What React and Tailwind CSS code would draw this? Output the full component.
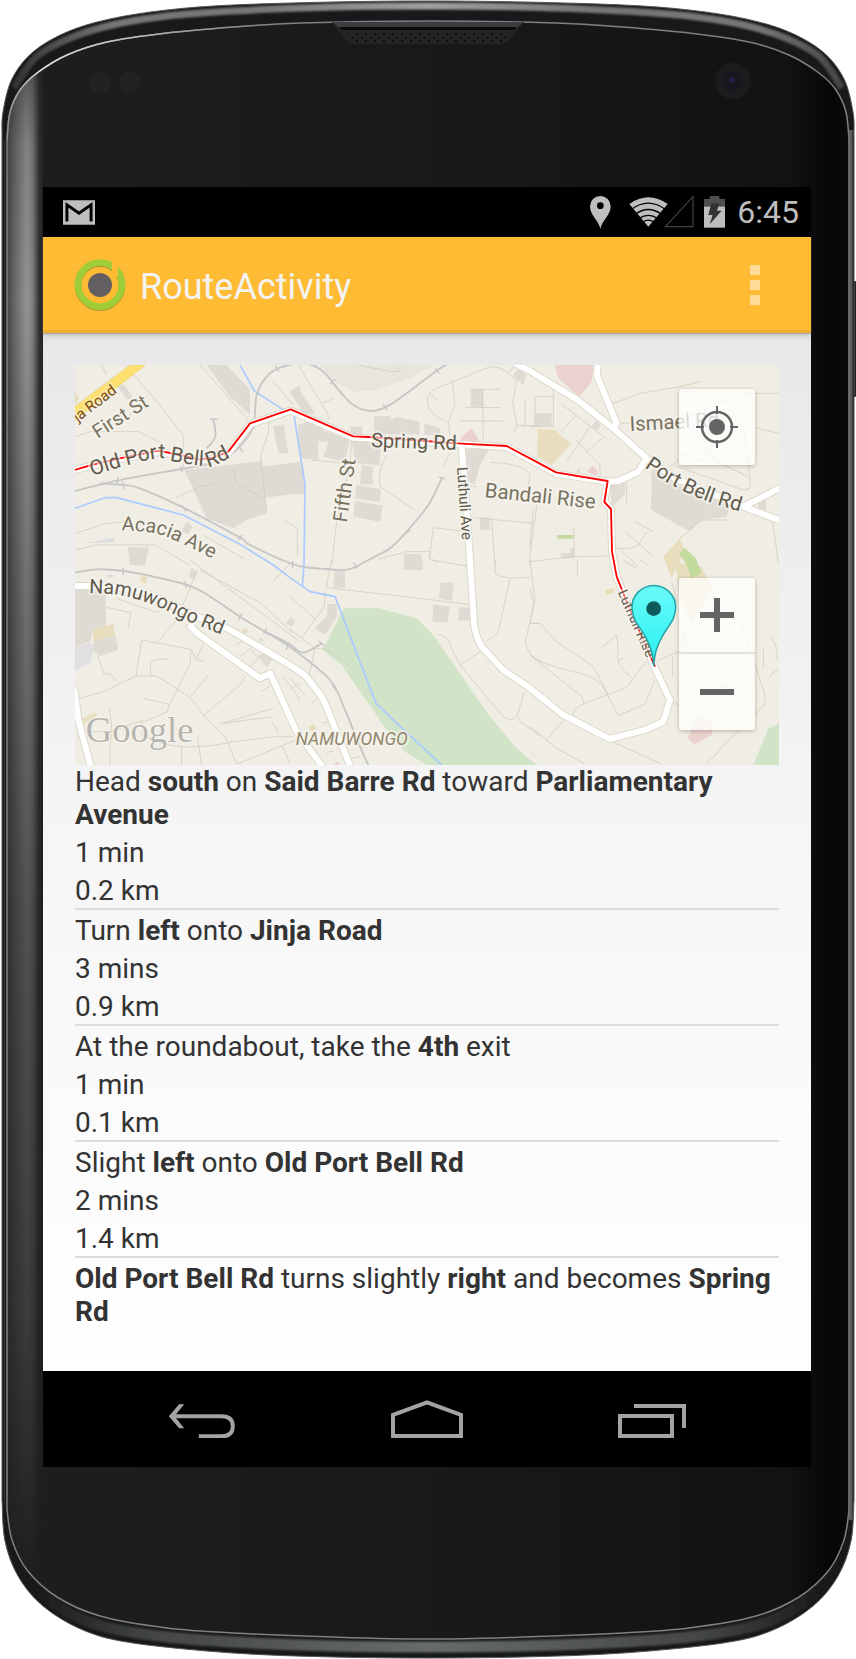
import React from 'react';

const FONT = 'Roboto, "Liberation Sans", sans-serif';

/* Catmull-Rom curve through a flat list of points. */
function curve(flat, start = 'M') {
  const p = [];
  for (let i = 0; i < flat.length; i += 2) p.push([flat[i], flat[i + 1]]);
  let d = `${start}${p[0][0]} ${p[0][1]}`;
  for (let i = 0; i < p.length - 1; i++) {
    const a = p[i - 1] || p[i];
    const b = p[i];
    const c = p[i + 1];
    const e = p[i + 2] || c;
    d += `C${(b[0] + (c[0] - a[0]) / 6).toFixed(1)} ${(b[1] + (c[1] - a[1]) / 6).toFixed(1)} ${(c[0] - (e[0] - b[0]) / 6).toFixed(1)} ${(c[1] - (e[1] - b[1]) / 6).toFixed(1)} ${c[0]} ${c[1]}`;
  }
  return d;
}

function mirrored(flat) {
  const out = [...flat];
  for (let i = flat.length - 4; i >= 0; i -= 2) out.push(856 - flat[i], flat[i + 1]);
  return out;
}

const OUTER_TOP = mirrored([2, 134, 3, 112, 12, 79, 33, 52, 67, 32, 110, 19, 167, 10, 233, 5, 333, 2, 428, 1]);
const OUTER_BOTTOM = mirrored([2, 1500, 5, 1541, 18, 1576, 43, 1606, 83, 1630, 133, 1643, 233, 1653, 333, 1657, 428, 1658]);
const INNER_TOP = mirrored([7, 140, 10, 112, 20, 90, 37, 73, 67, 55, 107, 42, 167, 33, 233, 27, 300, 23, 428, 21]);
const INNER_BOTTOM = mirrored([7, 1510, 12, 1540, 27, 1570, 57, 1597, 100, 1616, 167, 1628, 233, 1633, 333, 1637, 428, 1639]);
const RIM_TOP = mirrored([14, 88, 36, 57, 70, 38, 112, 25, 167, 16, 233, 11, 333, 7, 428, 6]);
const RIM_BOTTOM = mirrored([40, 1592, 70, 1614, 110, 1628, 167, 1637, 233, 1642, 333, 1646, 428, 1647]);

function reversed(flat) {
  const out = [];
  for (let i = flat.length - 2; i >= 0; i -= 2) out.push(flat[i], flat[i + 1]);
  return out;
}

const OUTER = curve(OUTER_TOP) + curve(reversed(OUTER_BOTTOM), 'L') + 'Z';
const INNER = curve(INNER_TOP) + curve(reversed(INNER_BOTTOM), 'L') + 'Z';

function PhoneBody() {
  return (
    <svg aria-hidden="true" viewBox="0 0 856 1659" preserveAspectRatio="none" className="absolute inset-0 h-full w-full">
      <defs>
        <linearGradient id="face" x1="0" x2="1" y1="0" y2="0">
          <stop offset="0" stopColor="#1e1e1e" />
          <stop offset="0.5" stopColor="#191919" />
          <stop offset="0.93" stopColor="#121212" />
          <stop offset="0.98" stopColor="#060606" />
          <stop offset="1" stopColor="#0a0a0a" />
        </linearGradient>
        <linearGradient id="shine" gradientUnits="userSpaceOnUse" x1="8" x2="44" y1="0" y2="0">
          <stop offset="0" stopColor="#4a4a4a" />
          <stop offset="0.2" stopColor="#6a6a6a" />
          <stop offset="0.52" stopColor="#949494" />
          <stop offset="0.68" stopColor="#808080" />
          <stop offset="0.86" stopColor="#343434" />
          <stop offset="1" stopColor="#1e1e1e" />
        </linearGradient>
        <linearGradient id="shineFade" gradientUnits="userSpaceOnUse" x1="0" x2="0" y1="70" y2="1590">
          <stop offset="0" stopColor="#fff" stopOpacity="0.5" />
          <stop offset="0.05" stopColor="#fff" stopOpacity="0.85" />
          <stop offset="0.15" stopColor="#fff" />
          <stop offset="0.35" stopColor="#fff" stopOpacity="0.7" />
          <stop offset="0.55" stopColor="#fff" stopOpacity="0.45" />
          <stop offset="0.82" stopColor="#fff" stopOpacity="0.26" />
          <stop offset="1" stopColor="#fff" stopOpacity="0" />
        </linearGradient>
        <mask id="shineMask">
          <rect x="0" y="70" width="60" height="1540" fill="url(#shineFade)" />
        </mask>
        <linearGradient id="rimTop" x1="0" x2="1" y1="0" y2="0">
          <stop offset="0" stopColor="#333" />
          <stop offset="0.12" stopColor="#777" />
          <stop offset="0.3" stopColor="#777" />
          <stop offset="0.5" stopColor="#a0a0a0" />
          <stop offset="0.7" stopColor="#757575" />
          <stop offset="0.9" stopColor="#777" />
          <stop offset="1" stopColor="#444" />
        </linearGradient>
        <linearGradient id="rimBottom" x1="0" x2="1" y1="0" y2="0">
          <stop offset="0" stopColor="#1c1c1c" />
          <stop offset="0.15" stopColor="#454747" />
          <stop offset="0.5" stopColor="#676b6b" />
          <stop offset="0.85" stopColor="#454747" />
          <stop offset="1" stopColor="#1c1c1c" />
        </linearGradient>
        <linearGradient id="edgeGlint" gradientUnits="userSpaceOnUse" x1="7" x2="300" y1="0" y2="0">
          <stop offset="0" stopColor="#999" stopOpacity="0.6" />
          <stop offset="0.1" stopColor="#e0e0e2" />
          <stop offset="0.5" stopColor="#b0b0b4" />
          <stop offset="1" stopColor="#808084" stopOpacity="0" />
        </linearGradient>
        <filter id="soft" x="-5%" y="-40%" width="110%" height="180%">
          <feGaussianBlur stdDeviation="1.2" />
        </filter>
        <pattern id="grille" width="9" height="7" patternUnits="userSpaceOnUse" x="346" y="32">
          <circle cx="2" cy="2" r="1" fill="#050505" />
          <circle cx="6.5" cy="5.5" r="1" fill="#050505" />
        </pattern>
        <clipPath id="faceClip">
          <path d={INNER} />
        </clipPath>
      </defs>
      <rect x="853" y="281" width="3" height="116" rx="1" fill="#222" />
      <path d={OUTER} fill="#18191a" stroke="#555" strokeWidth="1" />
      <path d={curve(RIM_TOP)} fill="none" stroke="url(#rimTop)" strokeWidth="7" filter="url(#soft)" />
      <path d={curve(RIM_BOTTOM)} fill="none" stroke="url(#rimBottom)" strokeWidth="11" filter="url(#soft)" />
      <path d={INNER} fill="url(#face)" />
      <g clipPath="url(#faceClip)">
        <rect x="7" y="70" width="37" height="1540" fill="url(#shine)" mask="url(#shineMask)" />
      </g>
      <path d={INNER} fill="none" stroke="#808084" strokeWidth="1.5" />
      <path d={curve([7, 140, 10, 112, 20, 90, 37, 73, 67, 55, 107, 42, 167, 33, 233, 27, 300, 23])} fill="none" stroke="url(#edgeGlint)" strokeWidth="1.5" />
      <path d="M850.5 130V1520" stroke="#6d6f70" strokeWidth="4" opacity="0.8" />
      <path d="M4.500 140V1505" stroke="#2c2e2e" strokeWidth="1.500" />
      <path d="M332 22L345 40Q348 44 353 44H500Q506 44 510 39L524 22Z" fill="#242425" />
      <path d="M332 22L340 28H516L524 22Z" fill="#3c3d40" />
      <path d="M339 27L342 30H514L517 27Z" fill="#0c0c0c" />
      <rect x="348" y="32" width="160" height="10" fill="url(#grille)" />
      <circle cx="100" cy="82" r="11" fill="#222" />
      <circle cx="130" cy="82" r="11" fill="#222" />
      <circle cx="733" cy="81" r="18" fill="#1c1c1e" />
      <circle cx="733" cy="81" r="10" fill="#171720" />
      <circle cx="732" cy="80" r="3" fill="#232044" />
    </svg>
  );
}

const ROADS = [
  curve([-20, 320, 60, 300, 145, 281, 250, 262, 300, 270, 375, 285, 415, 281, 462, 262]) + 'L527 177L647 137L835 218L880 220L1160 238L1295 246L1443 326L1598 350L1588 411L1608 432L1611 560L1625 635L1665 735L1737 903L1785 1005L1765 1070L1715 1093L1605 1122L1465 1050L1365 970L1285 915L1220 845Q1200 810 1197 775L1185 585L1160 240',
  'M1310 -10L1365 18L1505 103L1615 190L1715 280L1800 340L2005 425L2130 472M2005 425L2130 362M1715 280L1690 320L1630 348L1600 350M1570 -10L1565 30L1625 175L1615 190',
  'M-20 663H90' + curve([90, 663, 215, 685, 355, 750, 455, 790, 555, 847, 675, 920, 705, 950, 745, 1005, 780, 1090, 830, 1215], 'L'),
  'M357 755L347 785L370 807L555 940L585 925L665 1100L750 1215',
  'M-10 960L0 985L10 1065L50 1215',
];

function Tile({ x, y, children }) {
  return <g transform={`translate(${x} ${y})`}>{children}</g>;
}

function MapArt() {
  return (
    <svg
      role="img"
      aria-label="Map of the route"
      viewBox="0 0 2112 1200"
      preserveAspectRatio="xMidYMid slice"
      className="block h-[400px] w-full bg-[#f0ede4]"
      style={{ fontFamily: FONT }}
    >
      <defs>
        <path id="firstSt" d="M68 222L270 92" />
        <path id="jinja" d="M8 172L160 57" />
        <path id="oldPort" d={curve([52, 333, 145, 304, 250, 280, 300, 290, 380, 302, 425, 298, 540, 236])} />
        <path id="acacia" d={curve([140, 496, 235, 504, 320, 535, 500, 626])} />
        <path id="namu" d={curve([42, 684, 140, 692, 240, 722, 355, 775, 500, 832])} />
        <path id="portBell" d={curve([1708, 307, 1790, 360, 1900, 410, 2060, 458])} />
        <path id="luthuliRise" d="M1628 682L1733 920" />
        <linearGradient id="marker" x1="0" x2="0" y1="0" y2="1">
          <stop offset="0" stopColor="#6afafa" />
          <stop offset="1" stopColor="#28f0f0" />
        </linearGradient>
      </defs>

      {/* parks and fields */}
      <g fill="#d1e4c8">
        <path d="M807 730H910L1025 760L1075 810L1245 1055L1325 1150L1385 1200H1055L990 1160L935 1095L800 900L743 855Z" />
        <path d="M2035 1200L2080 1090L2112 1075V1200ZM1365 1185L1385 1200H1365Z" />
      </g>
      <path fill="#e8e5dd" d="M735 0L780 50L835 80L905 75L1015 35L1075 0Z" />

      {/* buildings */}
      <g fill="#dfdad4">
        <Tile x={-45} y={-30}>
          <path d="M440 30H500L570 105V180L505 120ZM373 345L605 318L620 475L560 495L520 520L440 490ZM607 335L720 320V415L615 428ZM640 215L672 208L684 295H655ZM172 95L190 88L215 120V132H200ZM365 530L380 500L397 515L385 538ZM203 577H267L255 630H210ZM690 115L720 90V140Z" />
          <path fill="#dcdcdc" d="M80 565L162 548V562Z" />
        </Tile>
        <Tile x={645} y={-30}>
          <path d="M0 110L20 95L78 178L40 175ZM25 210L85 190L100 225L180 255L165 320L100 305L115 262L85 258V315L35 310L25 260ZM180 215H217V240L275 255L268 330L195 325ZM252 184H300V195L320 185L388 200V238H252ZM403 205L450 220V240H403ZM215 330L248 335V388H210ZM200 390L273 403L270 440L195 430ZM195 437L278 452L270 500L190 485ZM0 325L40 330L42 418H0ZM542 103H580V155H542ZM530 285L600 275L570 330L553 390L530 375ZM570 487H600V525H570ZM668 60L690 38L708 60L700 92ZM735 175H750V210H735ZM343 597H395V630H343Z" />
        </Tile>
        <Tile x={1365} y={-30}>
          <path d="M12 175H65V213H12ZM185 213L200 195L212 210L202 228ZM240 390L285 375V415L245 458ZM372 335L460 400L600 450L590 485L515 495L478 528L363 465L365 350ZM685 430H708V465H685ZM92 595H120V580H132V610H92ZM138 350L150 335V355Z" />
        </Tile>
        <Tile x={-45} y={585}>
          <path d="M45 87H138V195L98 213L90 245L45 260ZM102 240L165 225L175 270L120 288L98 270ZM207 0H258L250 18L210 12ZM386 50L395 25L412 35L403 58ZM595 288L620 275L640 295L620 322ZM678 190L692 172L705 185L695 200ZM592 240L605 232L612 245ZM140 45H160V52H140Z" />
          <path fill="#e0e0e0" d="M45 262L92 248L102 262L92 310L45 330Z" />
        </Tile>
        <Tile x={645} y={585}>
          <path d="M135 33H165V83H130ZM75 205L112 165V132H140V170L105 225ZM342 0H398V30H342ZM452 68H492L485 122L447 115ZM430 133L480 140L472 188L427 185ZM507 140L547 145V182H504ZM0 170L12 182L0 198Z" />
        </Tile>
        <path d="M1925 970L1955 955L1972 970Z" />
      </g>
      <g fill="#ecd2cf">
        <Tile x={1365} y={-30}>
          <path d="M75 30H190L185 80L148 125L85 70ZM170 350L188 332L205 348L200 362Z" />
        </Tile>
        <path d="M1158 215L1190 190L1212 225V236H1160Z" />
        <path d="M1837 1118L1870 1055L1915 1075L1910 1110L1858 1138ZM777 1200L787 1188L795 1200Z" />
      </g>
      <g fill="#e8ddbd">
        <path d="M1388 192L1440 195L1488 238L1430 300L1387 275ZM1765 575L1815 520L1830 560L1795 625L1790 640ZM1800 590L1880 605L1912 675L1850 770L1820 710ZM1590 675L1620 668L1615 685L1592 690Z" />
        <path d="M55 792L115 777L120 810L55 828ZM20 1060L58 1043L68 1050L20 1080ZM195 650L200 632L218 637L212 655ZM700 1085L715 1078L725 1090L710 1100ZM500 798L508 790L520 797L510 808ZM0 80L12 100L0 120Z" />
      </g>
      <path fill="#c3dc9d" d="M1812 565L1830 548L1862 580L1880 625L1850 640L1835 600ZM1447 510H1495V521H1447Z" />

      {/* side streets */}
      <g fill="none" stroke="#d3cec1" strokeWidth="2.500">
        <Tile x={-45} y={-30}>
          <path d="M125 30L140 60M195 30L270 115L370 240V340M270 115L205 185L160 205M45 245L90 230H235L300 262M420 30L565 195M640 80L700 150M628 195L625 235L602 300L620 470M348 428L420 395L475 385M520 345L530 385L610 430M45 535L140 505L210 500M45 585L110 570H285L390 630M430 540L550 610M672 495L712 520V600" />
        </Tile>
        <Tile x={645} y={-30}>
          <path d="M25 30L115 180V195M98 145L130 130M205 30L305 50L330 48V30M470 200C390 170 405 110 440 100L600 35C640 35 665 60 680 80L668 140L680 210M420 115L445 138M487 75L495 150L475 200L480 240M460 332L480 295M540 103H632M525 157L630 158M577 103L580 255M512 198H640M185 250L180 330L140 500L125 630M65 315L170 325M290 300C270 330 265 370 270 395L370 462M602 322C680 325 710 340 720 360L715 395M540 395L560 395M540 487L730 505M605 490L615 630M740 450L720 600V630M430 518L530 530M430 518L418 610L440 620M265 612L350 590H420L418 610M705 135V215M670 235L680 212H750M680 30L650 55" />
        </Tile>
        <Tile x={1365} y={-30}>
          <path d="M0 215H70V105M15 175V125H70M92 145L230 252M138 180L92 232M180 215L110 320M215 250L165 295M138 255L210 330V360M250 145L330 115L450 95L512 80M265 205L440 200L570 145L640 115H747M675 218L747 235M640 215L660 370V400M430 330L640 405L660 400M420 335L510 265L560 320L655 365M455 300L525 320L560 260M290 375V445M315 500L370 530M285 530L370 605M352 530L325 570L300 580M272 585L320 630M255 580H300M450 550L515 495H590M728 500L745 625M10 460L0 575M132 515V605L0 620M132 605L235 603" />
        </Tile>
        <Tile x={-45} y={585}>
          <path d="M410 35L350 180L297 243M245 240L393 268L408 298L430 305M245 240L228 348M430 250L410 295M140 142L212 158L205 203M170 115L290 158L297 150M272 350V310Q280 295 328 297M52 418L130 395L228 348H290L390 412L430 465L495 530L530 612M393 268L390 310L328 438M390 412L445 345M250 415L328 433L322 455L240 490M430 467L540 375L555 350M480 492L640 445M495 490L560 480L640 470M95 515H150L250 480M248 520L250 500M365 560V615M412 530L425 615M240 520C330 580 450 560 520 545L645 530L700 530M530 612L720 535M148 445L155 500L150 560V615M638 490L655 515M668 560L690 610M112 285L132 342H150L168 362M525 255L570 230M540 290L570 265L600 300M560 330L600 290M390 0L720 245M420 30L600 128L700 220M640 65L690 10M605 395L640 370M670 350L720 420" />
        </Tile>
        <Tile x={645} y={585}>
          <path d="M125 0L108 85M112 83L540 133M105 95L103 140L33 235M0 108L78 180M0 208L75 265L58 345M75 265H105L215 345M425 0L530 18M615 0V40Q640 60 720 52M660 55L625 215Q610 235 590 242M442 222Q480 230 485 265L510 315L640 470Q665 490 683 462L703 395M510 315L578 270M720 0L735 120L705 250Q720 290 750 305M720 190H750M683 465L690 485L750 527M0 355L45 405M5 385L30 370M95 490L115 485M65 430L85 412M185 595L210 590M110 578L130 573" />
        </Tile>
        <Tile x={1365} y={585}>
          <path d="M0 285C90 350 200 320 230 400L265 467L345 432L375 360M0 190H30L80 245L190 320L235 405M215 262L260 225L265 270Q250 310 305 355M280 295L265 300M385 300L470 265L455 205M0 85L12 130L0 190M142 0V50M280 0L320 25M330 0L355 15M428 290V350M428 425L515 470M130 465Q130 445 160 432L290 382L375 270M50 540L105 475M0 500L80 565L165 612M235 540L395 612M530 612L635 500L690 450Q715 430 700 390L635 185M425 65L440 125M440 60L475 110M718 230Q745 250 742 300M700 265V325M718 355Q725 335 747 330M160 430Q165 410 130 390L0 285M0 575L15 590" />
        </Tile>
      </g>

      {/* streams */}
      <g fill="none" stroke="#a9cbff" strokeWidth="5" strokeLinejoin="round">
        <path d="M495 0L538 78L615 128L650 145L657 150L690 360L687 600L682 665" />
        <path d="M0 430L90 398H125L325 450L495 538L595 600L645 638L705 680L780 695L903 1015L985 1093L1100 1200" />
      </g>

      {/* railways */}
      <g fill="none" stroke="#c6c6c6" strokeWidth="5.500">
        <path d={curve([0, 378, 130, 346, 320, 312, 400, 298, 465, 270, 515, 220, 537, 175, 545, 90, 575, 35, 615, 8, 690, -5, 745, 20, 795, 80, 835, 120, 885, 138, 935, 125, 995, 85, 1085, 17, 1120, -4])} />
        <path d={curve([75, 355, 145, 360, 195, 370, 325, 428, 495, 518, 525, 540, 655, 598, 740, 611, 820, 613, 880, 585, 945, 550, 995, 500, 1060, 420, 1100, 340])} />
        <path d={curve([0, 623, 65, 613, 145, 618, 245, 637, 330, 658, 385, 682, 495, 755, 570, 800, 650, 850, 765, 945, 810, 1035, 855, 1145, 880, 1200])} />
        <path d={curve([415, 162, 421, 215, 395, 250])} />
        <path d={curve([570, 800, 640, 835, 685, 863, 740, 835])} />
        <path strokeWidth="4" d="M405 162H427M128 336V356M143 350L147 374M318 420L332 438M488 526L502 510M600 2L612 20M537 180V192M765 58L780 42M925 118L937 136M1080 8L1092 26M990 508L1005 494M1092 336L1110 342M653 588V610M835 592L848 610M143 608L146 630M328 648L335 670M490 765L500 745M565 808L575 790M632 856L642 838M772 962L786 978M850 1140L862 1152M732 828L748 842M494 245L502 262M318 305L322 322" />
      </g>

      {/* roads */}
      <path fill="#fde06f" stroke="#e9d08a" strokeWidth="2" d="M-5 128L165 0H212L-5 170Z" />
      <g fill="none" strokeLinejoin="round">
        {ROADS.map((d) => (
          <path key={d} d={d} stroke="#dcd8cc" strokeWidth="24" />
        ))}
        {ROADS.map((d) => (
          <path key={d} d={d} stroke="#fff" strokeWidth="18" />
        ))}
      </g>
      <path
        fill="none"
        stroke="#f00"
        strokeWidth="5.500"
        strokeLinejoin="round"
        d="M-5 316L60 297L145 278L250 257L300 267L375 283L415 278L460 260L525 175L647 133L835 214L880 216L1160 236L1295 243L1365 280L1443 322L1598 348L1588 411L1608 432L1611 560L1625 635L1665 735L1740 905"
      />

      {/* names */}
      <g fill="#5f5a4c" stroke="#f6f4ee" strokeOpacity="0.6" strokeWidth="14" strokeLinejoin="round" paintOrder="stroke" fontSize="60">
        <text fontSize="45" fill="#7a4a16" strokeOpacity="0.3"><textPath href="#jinja">ja Road</textPath></text>
        <text fontSize="59" fill="#77715f"><textPath href="#firstSt">First St</textPath></text>
        <text fontSize="62"><textPath href="#oldPort">Old Port Bell Rd</textPath></text>
        <text fontSize="59" fill="#77715f"><textPath href="#acacia">Acacia Ave</textPath></text>
        <text fontSize="59"><textPath href="#namu">Namuwongo Rd</textPath></text>
        <text x="888" y="246" fontSize="60" transform="rotate(2 888 246)">Spring Rd</text>
        <text x="815" y="474" fontSize="60" fill="#77715f" transform="rotate(-82 815 474)">Fifth St</text>
        <text x="1146" y="307" fontSize="45" transform="rotate(86 1146 307)">Luthuli Ave</text>
        <text x="1228" y="396" fontSize="61" fill="#77715f" transform="rotate(6 1228 396)">Bandali Rise</text>
        <text x="1665" y="198" fontSize="61" fill="#77715f" transform="rotate(-3 1665 198)">Ismael Rd</text>
        <text fontSize="61"><textPath href="#portBell">Port Bell Rd</textPath></text>
        <text fontSize="42"><textPath href="#luthuliRise">Luthuli Rise</textPath></text>
        <text x="662" y="1140" fontSize="53" fontStyle="italic" fill="#94866a">NAMUWONGO</text>
      </g>
      <text x="32" y="1130" fontSize="110" fill="#b6b4ae" stroke="#fff" strokeOpacity="0.5" strokeWidth="6" paintOrder="stroke" fontFamily='"Liberation Serif", serif'>Google</text>

      {/* marker */}
      <g transform="translate(1365 585)">
        <path
          d="M371 318C369 280 362 260 346 230C330 200 306 180 306 142A65 65 0 0 1 437 142C437 180 412 200 395 232C380 262 373 280 371 318Z"
          fill="url(#marker)"
          stroke="#22a5a5"
          strokeWidth="4.500"
        />
        <circle cx="371" cy="146" r="22" fill="#0f5a5a" />
      </g>
    </svg>
  );
}

const STEPS = [
  { text: [['Head '], ['south', 1], [' on '], ['Said Barre Rd', 1], [' toward '], ['Parliamentary Avenue', 1]], time: '1 min', distance: '0.2 km' },
  { text: [['Turn '], ['left', 1], [' onto '], ['Jinja Road', 1]], time: '3 mins', distance: '0.9 km' },
  { text: [['At the roundabout, take the '], ['4th', 1], [' exit']], time: '1 min', distance: '0.1 km' },
  { text: [['Slight '], ['left', 1], [' onto '], ['Old Port Bell Rd', 1]], time: '2 mins', distance: '1.4 km' },
  { text: [['Old Port Bell Rd', 1], [' turns slightly '], ['right', 1], [' and becomes '], ['Spring Rd', 1]], time: '1 min' },
];

function StatusBar() {
  return (
    <div className="flex h-[50px] items-center justify-between bg-black pl-5 pr-3">
      <svg aria-hidden="true" viewBox="0 0 98 75" className="h-[25px] w-8">
        <rect width="98" height="75" fill="#bebebe" />
        <path d="M12 65V14L49 40L86 14V65" fill="none" stroke="#000" strokeWidth="9" />
      </svg>
      <div className="flex items-center">
        <svg aria-hidden="true" viewBox="493 586 63 99" className="h-[33px] w-[21px]">
          <path fillRule="evenodd" fill="#bebebe" d="M524 685C520 660 493 645 493 617A31 31 0 0 1 555 617C555 645 528 660 524 685ZM524 605A10 10 0 1 0 524 625A10 10 0 1 0 524 605Z" />
        </svg>
        <svg aria-hidden="true" viewBox="610 586 195 99" className="ml-[18px] h-[33px] w-[65px]">
          <path fill="#bebebe" d="M668 678L611 610Q668 570 726 610Z" />
          <path fill="none" stroke="#000" strokeWidth="4" d="M616 627Q668 588 720 627M628 641Q668 612 708 641M640 654Q668 634 696 654M651 665Q668 652 685 665" />
          <path fill="none" stroke="#444" strokeWidth="3.500" d="M802 588V678H719Z" />
        </svg>
        <svg aria-hidden="true" viewBox="834 586 63 99" className="ml-[10px] h-[33px] w-[21px]">
          <path fill="#4f4f4f" d="M834 595H851V586H880V595H897V620H834Z" />
          <path fill="#bebebe" d="M834 618H897V681H834Z" />
          <path fill="#333" d="M856 608H880L873 630H887L851 671L860 643H847Z" />
        </svg>
        <span className="ml-3 text-[32px] leading-[38px] text-[#bebebe]">6:45</span>
      </div>
    </div>
  );
}

function ActionBar() {
  return (
    <header className="relative z-10 flex h-24 items-center border-b-3 border-[#efae2e] bg-[#ffbb33] px-[31px] pt-[3px] shadow-[0_1px_1px_#a8a8a8,0_3px_6px_rgba(0,0,0,0.15)]">
      <svg aria-hidden="true" viewBox="222 778 156 156" className="size-[52px]">
        <defs>
          <mask id="logoGap">
            <rect x="222" y="778" width="156" height="160" fill="#fff" />
            <rect x="336" y="770" width="18" height="60" fill="#000" />
          </mask>
        </defs>
        <g mask="url(#logoGap)" fill="none" strokeWidth="20">
          <circle cx="300" cy="858" r="66" stroke="#7d7a2a" strokeOpacity="0.6" />
          <circle cx="300" cy="855" r="66" stroke="#9fcd38" />
          <path fill="#9fcd38" d="M354 800V850H362V812Z" />
        </g>
        <circle cx="300" cy="856" r="36" fill="#646061" />
      </svg>
      <h1 className="ml-[14px] flex-1 pt-1 text-[36px] leading-[42px] text-[#f3f3f3]">RouteActivity</h1>
      <button type="button" aria-label="More options" className="flex h-16 w-[50px] flex-col items-center justify-center gap-[5px]">
        <span className="size-[10px] bg-[#ffdd99]" />
        <span className="size-[10px] bg-[#ffdd99]" />
        <span className="size-[10px] bg-[#ffdd99]" />
      </button>
    </header>
  );
}

function RouteMap() {
  return (
    <div className="relative">
      <MapArt />
      <button type="button" aria-label="My location" className="absolute right-6 top-6 flex size-[76px] items-center justify-center rounded-[3px] bg-white/75 shadow-[0_1px_4px_rgba(0,0,0,0.25)]">
        <svg aria-hidden="true" viewBox="-21 -21 42 42" className="size-[42px]">
          <circle r="15" fill="none" stroke="#646464" strokeWidth="2.500" />
          <circle r="8" fill="#646464" />
          <path d="M-21 0H-13M13 0H21M0 -21V-13M0 13V21" stroke="#646464" strokeWidth="2" />
        </svg>
      </button>
      <div className="absolute bottom-[35px] right-6 flex w-[76px] flex-col rounded-[3px] bg-white/75 shadow-[0_1px_4px_rgba(0,0,0,0.25)]">
        <button type="button" aria-label="Zoom in" className="flex h-[76px] items-center justify-center border-b-2 border-[#e2e1de]">
          <svg aria-hidden="true" viewBox="0 0 34 34" className="size-[34px]">
            <path d="M0 17H34M17 0V34" stroke="#646464" strokeWidth="6" />
          </svg>
        </button>
        <button type="button" aria-label="Zoom out" className="flex h-[76px] items-center justify-center">
          <svg aria-hidden="true" viewBox="0 0 34 34" className="size-[34px]">
            <path d="M0 17H34" stroke="#646464" strokeWidth="6" />
          </svg>
        </button>
      </div>
    </div>
  );
}

function Directions() {
  return (
    <div className="h-[574px] overflow-hidden">
      <ol className="-mt-1 text-[28px] leading-[33px] text-[#333]">
        {STEPS.map((step, i) => (
          <li key={i} className="border-b-2 border-[#dcdcdc]">
            <p className="pb-px pt-1">
              {step.text.map(([words, strong], j) => (strong ? <b key={j} className="font-bold">{words}</b> : words))}
            </p>
            <p className="pb-px pt-1">{step.time}</p>
            {step.distance && <p className="pb-px pt-1">{step.distance}</p>}
          </li>
        ))}
      </ol>
    </div>
  );
}

function NavBar() {
  return (
    <nav className="grid h-24 grid-cols-3 bg-black px-[46px]">
      <button type="button" aria-label="Back" className="flex items-center justify-center">
        <svg aria-hidden="true" viewBox="508 122 200 114" className="h-[38px] w-[67px]" fill="none" stroke="#a3a3a3" strokeWidth="12">
          <path d="M520 171H668Q702 171 702 201Q702 231 668 231H600" />
          <path d="M556 135H541L510 171L541 207H556L527 171Z" fill="#a3a3a3" stroke="none" />
        </svg>
      </button>
      <button type="button" aria-label="Home" className="flex items-center justify-center">
        <svg aria-hidden="true" viewBox="0 0 216 114" className="h-[38px] w-[72px]" fill="none" stroke="#a3a3a3" strokeWidth="12">
          <path d="M6 108V45L108 7L210 45V108Z" />
        </svg>
      </button>
      <button type="button" aria-label="Recent apps" className="flex items-center justify-center">
        <svg aria-hidden="true" viewBox="579 123 204 114" className="h-[38px] w-[68px]" fill="none" stroke="#a3a3a3" strokeWidth="12">
          <path d="M585 171H741V231H585ZM627 141H777V207" />
        </svg>
      </button>
    </nav>
  );
}

export default function App() {
  return (
    <div className="min-h-screen bg-white" style={{ fontFamily: FONT }}>
      <div className="relative pb-48 pl-[43px] pr-[45px] pt-[187px]">
        <PhoneBody />
        <div className="relative">
          <StatusBar />
          <ActionBar />
          <main className="bg-linear-to-b from-[#e8e8e8] via-[#f6f6f6] to-white p-8">
            <RouteMap />
            <Directions />
          </main>
          <NavBar />
        </div>
      </div>
    </div>
  );
}
